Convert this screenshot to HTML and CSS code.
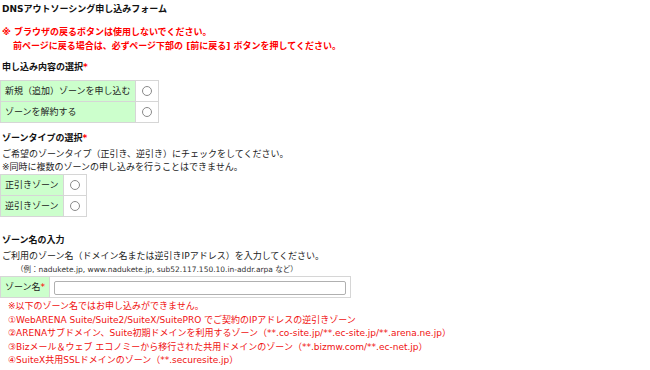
FILE: index.html
```html
<!DOCTYPE html>
<html lang="ja">
<head>
  <meta charset="UTF-8">
  <title>DNSアウトソーシング申し込みフォーム</title>
  <link rel="stylesheet" href="styles.css">
</head>
<body>
  <h1 class="title">DNSアウトソーシング申し込みフォーム</h1>

  <div class="warn">
    <p>※ ブラウザの戻るボタンは使用しないでください。</p>
    <p class="indent">前ページに戻る場合は、必ずページ下部の [前に戻る] ボタンを押してください。</p>
  </div>

  <h2 class="sec">申し込み内容の選択<span class="req">*</span></h2>
  <table class="form-table">
    <tr><th>新規（追加）ゾーンを申し込む</th><td><input type="radio" name="kind"></td></tr>
    <tr><th>ゾーンを解約する</th><td><input type="radio" name="kind"></td></tr>
  </table>

  <h2 class="sec sec-2">ゾーンタイプの選択<span class="req">*</span></h2>
  <p class="note">ご希望のゾーンタイプ（正引き、逆引き）にチェックをしてください。</p>
  <p class="note">※同時に複数のゾーンの申し込みを行うことはできません。</p>
  <table class="form-table">
    <tr><th>正引きゾーン</th><td><input type="radio" name="type"></td></tr>
    <tr><th>逆引きゾーン</th><td><input type="radio" name="type"></td></tr>
  </table>

  <h2 class="sec sec-3">ゾーン名の入力</h2>
  <p class="note">ご利用のゾーン名（ドメイン名または逆引きIPアドレス）を入力してください。</p>
  <p class="example">（例：nadukete.jp, www.nadukete.jp, sub52.117.150.10.in-addr.arpa など）</p>
  <table class="form-table zone-table">
    <tr><th>ゾーン名<span class="req">*</span></th><td><input type="text" class="zone-input"></td></tr>
  </table>

  <ul class="ng-list">
    <li>※以下のゾーン名ではお申し込みができません。</li>
    <li>①WebARENA Suite/Suite2/SuiteX/SuitePRO でご契約のIPアドレスの逆引きゾーン</li>
    <li>②ARENAサブドメイン、Suite初期ドメインを利用するゾーン（**.co-site.jp/**.ec-site.jp/**.arena.ne.jp）</li>
    <li>③Bizメール＆ウェブ エコノミーから移行された共用ドメインのゾーン（**.bizmw.com/**.ec-net.jp）</li>
    <li>④SuiteX共用SSLドメインのゾーン（**.securesite.jp）</li>
  </ul>
</body>
</html>
```

FILE: styles.css
```css
body {
  margin: 0;
  padding: 3px 0 0 0;
  font-family: "DejaVu Sans", "Noto Sans CJK JP", sans-serif;
  font-size: 9px;
  line-height: 13px;
  color: #222;
  background: #fff;
}

p {
  margin: 0;
}

.title {
  font-size: 9px;
  font-weight: bold;
  margin: 0 0 0 2px;
  color: #111;
}

.warn {
  margin: 9px 0 0 2px;
  color: #f00;
  font-weight: bold;
  line-height: 14px;
}

.warn .indent {
  padding-left: 11px;
}

.sec {
  font-size: 9px;
  font-weight: bold;
  margin: 8px 0 6px 2px;
  color: #111;
}

.sec-2 {
  margin-top: 9px;
  margin-bottom: 3px;
}

.sec-3 {
  margin-top: 17px;
  margin-bottom: 3px;
}

.req {
  color: #f00;
}

.note {
  margin-left: 2px;
}

.example {
  font-size: 7.5px;
  margin-left: 16px;
  color: #333;
}

.form-table {
  border-collapse: collapse;
  border: 1px solid #d6d6d6;
}

.form-table th,
.form-table td {
  border: 1px solid #d6d6d6;
  height: 20px;
  padding: 0 4px;
}

.form-table th {
  background: #ccffcc;
  font-weight: normal;
  text-align: left;
  white-space: nowrap;
}

.form-table td {
  background: #fff;
  text-align: center;
  padding: 0 6px;
}

.form-table input[type="radio"] {
  appearance: none;
  width: 10px;
  height: 10px;
  margin: 3px 0 0 0;
  border: 1px solid #8a8a8a;
  border-radius: 50%;
  background: #fff;
}

.zone-table td {
  padding: 0 4px;
}

.zone-input {
  width: 292px;
  height: 14px;
  padding: 0;
  margin: 2px 0 0 0;
  border: 1px solid #b0b0b0;
  border-radius: 2px;
  box-sizing: border-box;
  display: block;
}

.ng-list {
  list-style: none;
  margin: 2px 0 0 8px;
  padding: 0;
  color: #f01010;
  line-height: 13.5px;
}
```
